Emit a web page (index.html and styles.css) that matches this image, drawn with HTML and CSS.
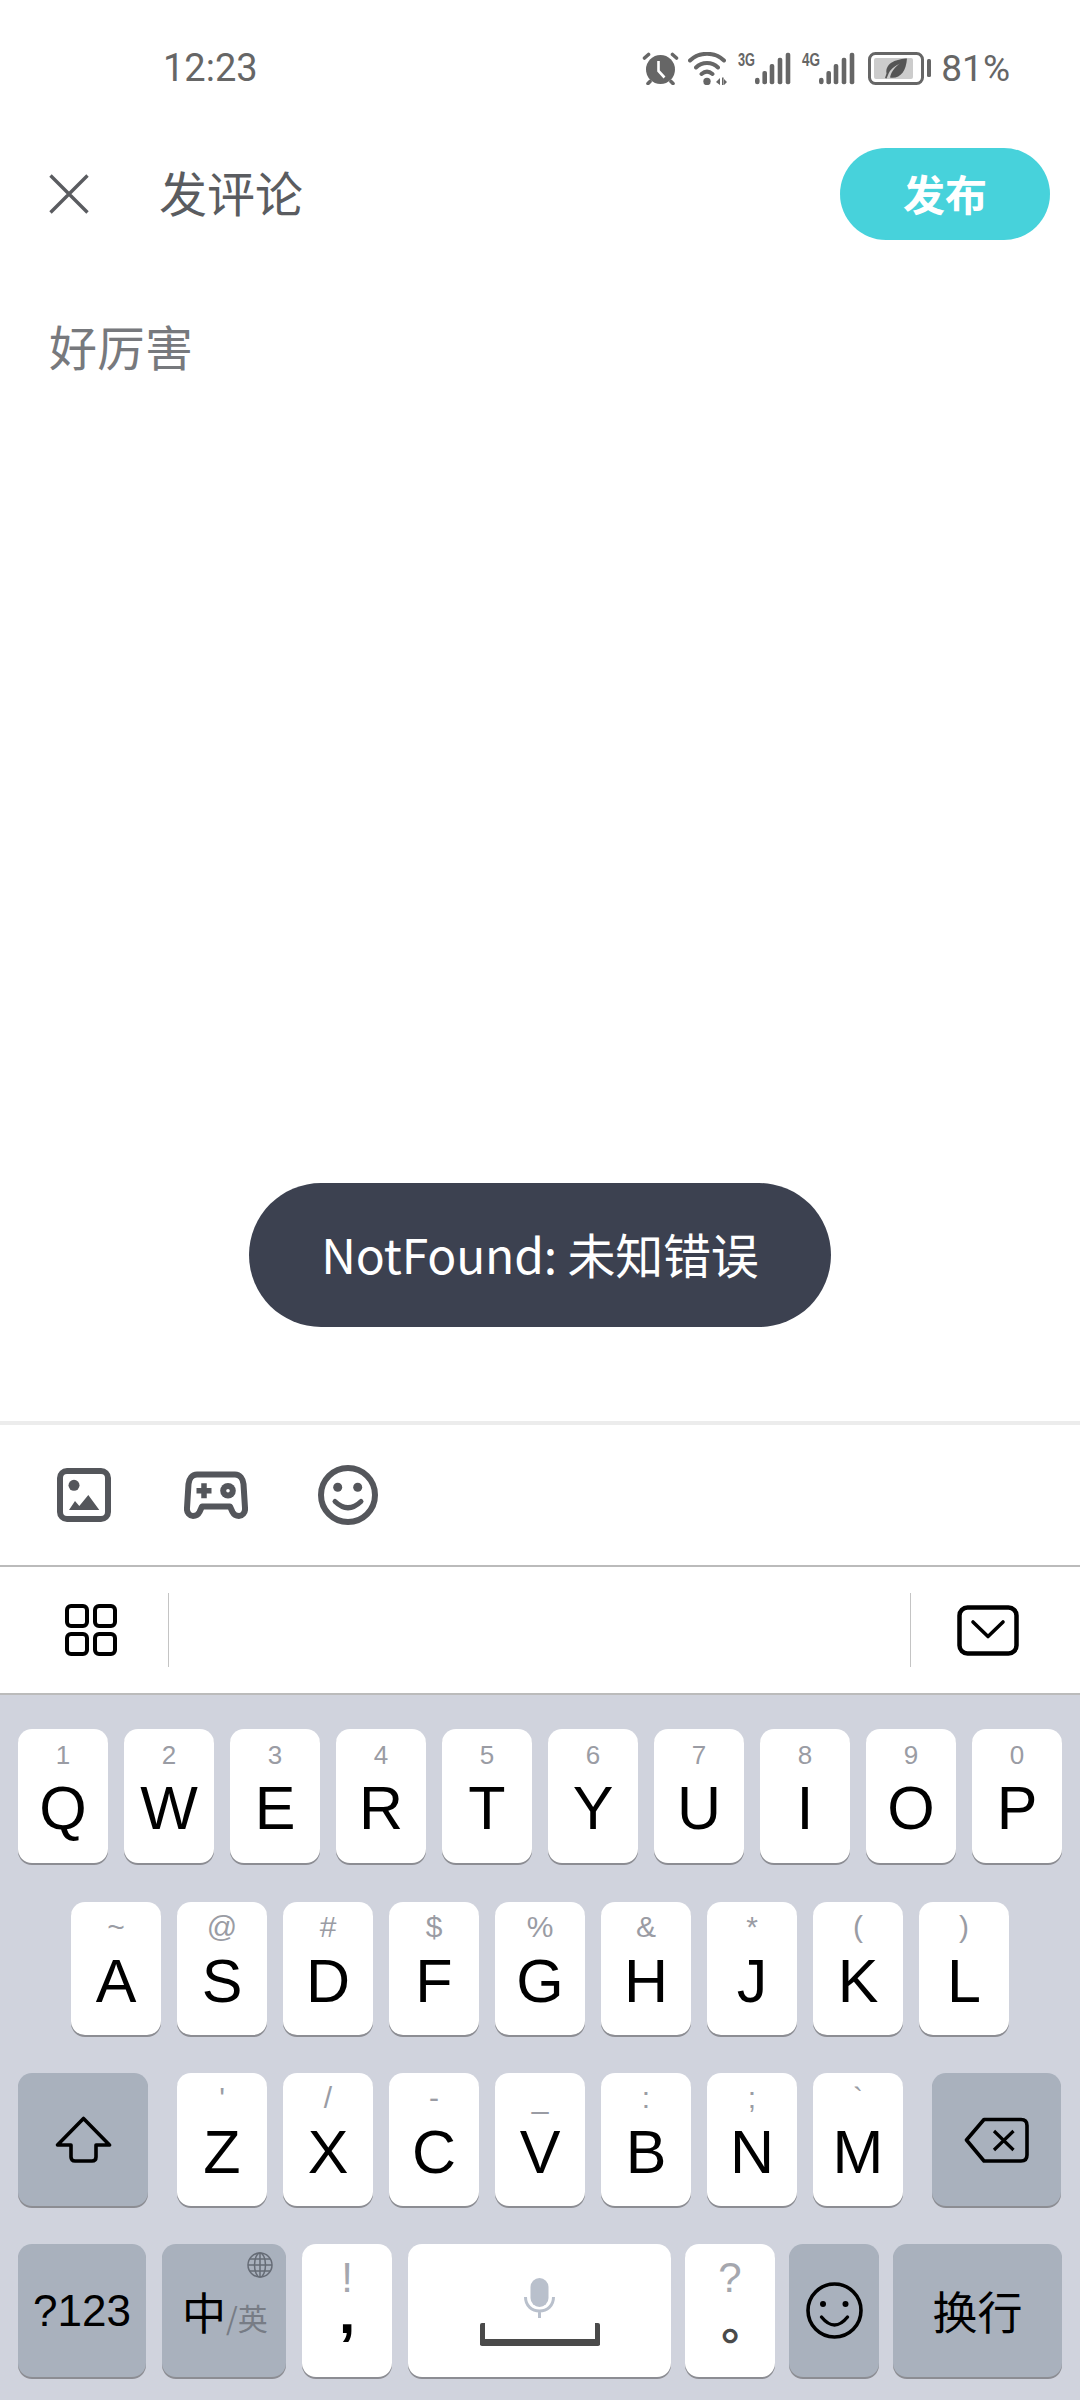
FILE: index.html
```html
<!DOCTYPE html>
<html lang="zh-CN">

<head>
  <meta charset="UTF-8">
  <meta name="viewport" content="width=device-width, initial-scale=1.0">
  <title>发评论</title>
  <link rel="stylesheet" href="styles.css">
</head>

<body>
  <div class="page">
    <div class="status">
      <span class="time">12:23</span>
      <div class="status-icons">
        <svg class="ic-alarm" width="37" height="33" viewBox="0 0 37 33">
          <circle cx="18.5" cy="17.5" r="14.5" fill="#666" />
          <path d="M16.5 9V19l6 6.5" fill="none" stroke="#fff" stroke-width="2.6" />
          <path d="M2.5 6L6.5 2.5M34.500 6L30.500 2.5M6 31.500l2-2M31 31.500l-2-2" fill="none" stroke="#666" stroke-width="3.600" stroke-linecap="round" />
        </svg>
        <svg class="ic-wifi" width="39" height="33" viewBox="0 0 39 33">
          <path d="M2 8.5C11 -0.5 27 -0.5 36 8.5M8 15.5C14 9.5 24 9.5 30 15.5M13.5 22C17 19 21 19 24.5 22" fill="none" stroke="#666" stroke-width="3.900" stroke-linecap="round" />
          <circle cx="19" cy="29.5" r="3.700" fill="#666" />
          <path d="M28 30l4-4v7zM34 25.5h1.6v7.5H34zM36 27l3 3-3 3z" fill="#666" />
        </svg>
        <svg class="ic-signal" width="53" height="33" viewBox="0 0 53 33">
          <text x="0" y="14" class="net" textLength="17" lengthAdjust="spacingAndGlyphs">3G</text>
          <rect x="17" y="25.7" width="4.6" height="6.6" rx="2.3" fill="#666" />
          <rect x="24.4" y="19" width="4.6" height="13.3" rx="2" fill="#666" />
          <rect x="31.7" y="12" width="4.6" height="20.3" rx="2" fill="#666" />
          <rect x="39.7" y="5.7" width="4.6" height="26.6" rx="2" fill="#666" />
          <rect x="47.7" y="0.7" width="4.6" height="31.6" rx="2" fill="#666" />
        </svg>
        <svg class="ic-signal" width="53" height="33" viewBox="0 0 53 33">
          <text x="0" y="14" class="net" textLength="18" lengthAdjust="spacingAndGlyphs">4G</text>
          <rect x="17" y="25.7" width="4.6" height="6.6" rx="2.3" fill="#666" />
          <rect x="24.4" y="19" width="4.6" height="13.3" rx="2" fill="#666" />
          <rect x="31.7" y="12" width="4.6" height="20.3" rx="2" fill="#666" />
          <rect x="39.7" y="5.7" width="4.6" height="26.6" rx="2" fill="#666" />
          <rect x="47.7" y="0.7" width="4.6" height="31.6" rx="2" fill="#666" />
        </svg>
        <svg class="ic-battery" width="63" height="33" viewBox="0 0 63 33">
          <rect x="1.5" y="1.5" width="53" height="30" rx="6" fill="none" stroke="#666" stroke-width="3" />
          <rect x="6" y="6" width="39" height="21" rx="2" fill="#ccc" />
          <rect x="59" y="7" width="4" height="18" rx="1.5" fill="#666" />
          <path d="M39 6.5C30 7 17 10 18.5 21.5L17 26l1.5.5 1.5-3.5C22 17 27 14 32 11.5 27 15 23.5 19 22 25.5 32 27 38 20 39 6.5Z" fill="#555" />
        </svg>
        <span class="percent">81%</span>
      </div>
    </div>

    <div class="header">
      <svg class="close" width="40" height="40" viewBox="0 0 40 40">
        <path d="M1.5 1.5L38.5 38.5M38.5 1.5L1.5 38.5" fill="none" stroke="#5a5c60" stroke-width="3.4" />
      </svg>
      <span class="title">发评论</span>
      <span class="publish">发布</span>
    </div>

    <div class="editor">好厉害</div>

    <div class="toast">NotFound: 未知错误</div>

    <div class="toolbar">
      <svg class="tool-image" width="54" height="54" viewBox="0 0 54 54">
        <rect x="3" y="3" width="48" height="48" rx="7" fill="none" stroke="#54565b" stroke-width="6" />
        <circle cx="17" cy="17.3" r="5.5" fill="#54565b" />
        <path d="M12 42L18 33L22.3 38L31.3 27L42.3 42Z" fill="#54565b" />
      </svg>
      <svg class="tool-game" width="64" height="48" viewBox="0 0 64 48">
        <path d="M13 3.500H51C56 3.500 59 8 59.500 13L61 37C61.500 42 58 45 55 45C52 45 50 44 48.500 41L46 35.500H18L15.500 41C14 44 12 45 9 45C6 45 2.500 42 3 37L4.500 13C5 8 8 3.500 13 3.500Z" fill="none" stroke="#54565b" stroke-width="6" stroke-linejoin="round" />
        <path d="M12.500 19.700H27.500M20 12.200V27.200" fill="none" stroke="#54565b" stroke-width="5.500" />
        <circle cx="44" cy="19.700" r="7.800" fill="#54565b" />
        <circle cx="44" cy="19.700" r="1.800" fill="#fff" />
      </svg>
      <svg class="tool-smile" width="60" height="60" viewBox="0 0 60 60">
        <circle cx="30" cy="30" r="27" fill="none" stroke="#54565b" stroke-width="6" />
        <circle cx="19.700" cy="22.300" r="4.500" fill="#54565b" />
        <circle cx="39.700" cy="22.300" r="4.500" fill="#54565b" />
        <path d="M17 36.500Q30 49 43 36.500" fill="none" stroke="#54565b" stroke-width="5" stroke-linecap="round" />
      </svg>
    </div>

    <div class="candidates">
      <div class="cand-left">
        <div class="grid-icon"><i></i><i></i><i></i><i></i></div>
      </div>
      <div class="cand-right">
        <svg width="62" height="51" viewBox="0 0 62 51">
          <rect x="2.500" y="2.500" width="57" height="46" rx="8" fill="none" stroke="#000" stroke-width="4.500" />
          <path d="M16 17L31 31.500L46 17" fill="none" stroke="#000" stroke-width="3.600" stroke-linecap="round" stroke-linejoin="round" />
        </svg>
      </div>
    </div>

    <div class="keyboard">
      <div class="row row-first">
        <div class="key"><span class="alt">1</span><span class="letter">Q</span></div>
        <div class="key"><span class="alt">2</span><span class="letter">W</span></div>
        <div class="key"><span class="alt">3</span><span class="letter">E</span></div>
        <div class="key"><span class="alt">4</span><span class="letter">R</span></div>
        <div class="key"><span class="alt">5</span><span class="letter">T</span></div>
        <div class="key"><span class="alt">6</span><span class="letter">Y</span></div>
        <div class="key"><span class="alt">7</span><span class="letter">U</span></div>
        <div class="key"><span class="alt">8</span><span class="letter">I</span></div>
        <div class="key"><span class="alt">9</span><span class="letter">O</span></div>
        <div class="key"><span class="alt">0</span><span class="letter">P</span></div>
      </div>
      <div class="row row-second row-symbols">
        <div class="key"><span class="alt">~</span><span class="letter">A</span></div>
        <div class="key"><span class="alt">@</span><span class="letter">S</span></div>
        <div class="key"><span class="alt">#</span><span class="letter">D</span></div>
        <div class="key"><span class="alt">$</span><span class="letter">F</span></div>
        <div class="key"><span class="alt">%</span><span class="letter">G</span></div>
        <div class="key"><span class="alt">&amp;</span><span class="letter">H</span></div>
        <div class="key"><span class="alt">*</span><span class="letter">J</span></div>
        <div class="key"><span class="alt">(</span><span class="letter">K</span></div>
        <div class="key"><span class="alt">)</span><span class="letter">L</span></div>
      </div>
      <div class="row row-symbols">
        <div class="key key-gray key-shift">
          <svg width="57" height="48" viewBox="0 0 57 48">
            <path d="M28.500 2.500L54.500 29H41V41Q41 45 37 45H20Q16 45 16 41V29H2.500Z" fill="none" stroke="#000" stroke-width="3.600" stroke-linejoin="round" />
          </svg>
        </div>
        <div class="key"><span class="alt">'</span><span class="letter">Z</span></div>
        <div class="key"><span class="alt">/</span><span class="letter">X</span></div>
        <div class="key"><span class="alt">-</span><span class="letter">C</span></div>
        <div class="key"><span class="alt">_</span><span class="letter">V</span></div>
        <div class="key"><span class="alt">:</span><span class="letter">B</span></div>
        <div class="key"><span class="alt">;</span><span class="letter">N</span></div>
        <div class="key"><span class="alt">`</span><span class="letter">M</span></div>
        <div class="key key-gray key-del">
          <svg width="65" height="46" viewBox="0 0 65 46">
            <path d="M20 2.500H57Q63 2.500 63 8.500V38Q63 44 57 44H20L2.500 23Z" fill="none" stroke="#000" stroke-width="3.600" stroke-linejoin="round" />
            <path d="M30 14L49.500 33M49.500 14L30 33" fill="none" stroke="#000" stroke-width="3.200" />
          </svg>
        </div>
      </div>
      <div class="row">
        <div class="key key-gray key-num">?123</div>
        <div class="key key-gray key-lang">
          <svg class="globe" width="26" height="26" viewBox="0 0 26 26">
            <g fill="none" stroke="#666c76" stroke-width="1.500">
              <circle cx="13" cy="13" r="12" />
              <ellipse cx="13" cy="13" rx="5.500" ry="12" />
              <path d="M13 1V25M1 13H25M3 7H23M3 19H23" />
            </g>
          </svg>
          <span class="lang-main">中</span><span class="lang-sub">/英</span>
        </div>
        <div class="key key-punct"><span class="alt-big">!</span><span class="comma">,</span></div>
        <div class="key key-space">
          <svg class="mic" width="31" height="40" viewBox="0 0 31 40">
            <rect x="6.500" y="0" width="18" height="29" rx="9" fill="#b9c0cc" />
            <path d="M1.500 19C1.500 28 8 33 15.500 33C23 33 29.500 28 29.500 19M15.500 33V40" fill="none" stroke="#b9c0cc" stroke-width="3" />
          </svg>
          <div class="spacebar"></div>
        </div>
        <div class="key key-punct key-tight"><span class="alt-big">?</span><span class="period">。</span></div>
        <div class="key key-gray key-tight">
          <svg width="57" height="57" viewBox="0 0 57 57">
            <circle cx="28.500" cy="28.500" r="26.500" fill="none" stroke="#000" stroke-width="3.600" />
            <circle cx="17" cy="22" r="3" fill="#000" />
            <circle cx="39.500" cy="22" r="3" fill="#000" />
            <path d="M15.500 35Q28.500 51 41.500 35" fill="none" stroke="#000" stroke-width="3.400" stroke-linecap="round" />
          </svg>
        </div>
        <div class="key key-gray key-tight key-enter">换行</div>
      </div>
    </div>
  </div>
</body>

</html>
```

FILE: styles.css
```css
* {
  box-sizing: border-box;
}

body {
  margin: 0;
  background: #fff;
  font-family: "Noto Sans CJK SC", "Noto Sans", sans-serif;
}

.page {
  position: relative;
  width: 1080px;
  height: 2400px;
  display: flex;
  flex-direction: column;
  overflow: hidden;
}

/* status bar */
.status {
  height: 100px;
  padding: 37px 70px 0 163px;
  display: flex;
  align-items: flex-start;
  justify-content: space-between;
  color: #666;
  font-family: Roboto, sans-serif;
}

.time {
  font-size: 38px;
  line-height: 62px;
}

.status-icons {
  display: flex;
  align-items: center;
  height: 62px;
}

.status-icons svg {
  display: block;
}

.ic-wifi {
  margin-left: 9px;
}

.ic-signal {
  margin-left: 11px;
  overflow: visible;
}

.ic-battery {
  margin-left: 13px;
}

.net {
  font-family: "Liberation Sans", sans-serif;
  font-size: 18px;
  font-weight: 700;
  fill: #666;
}

.percent {
  margin-left: 10px;
  font-size: 37px;
}

/* header */
.header {
  height: 184px;
  padding: 0 30px 0 49px;
  display: flex;
  align-items: center;
}

.close {
  margin: 3px 70px 0 0;
}

.title {
  flex: 1;
  margin-top: -2px;
  font-size: 48px;
  color: #5a5c60;
}

.publish {
  width: 210px;
  height: 92px;
  margin-top: 4px;
  border-radius: 46px;
  background: #47d2db;
  color: #fff;
  font-size: 42px;
  font-weight: 700;
  line-height: 89px;
  text-align: center;
}

/* editor */
.editor {
  flex: 1;
  padding: 26px 49px 0;
  font-size: 48px;
  line-height: 70px;
  color: #77797d;
}

.toast {
  position: absolute;
  left: 249px;
  top: 1183px;
  width: 582px;
  height: 144px;
  border-radius: 72px;
  background: #3c4150;
  color: #fff;
  font-size: 48px;
  letter-spacing: -0.2px;
  line-height: 140px;
  text-align: center;
}

/* tools above keyboard */
.toolbar {
  height: 146px;
  padding-left: 57px;
  border-top: 4px solid #ececec;
  border-bottom: 2px solid #bbb;
  display: flex;
  align-items: center;
}

.tool-game {
  margin-left: 73px;
}

.tool-smile {
  margin-left: 70px;
}

.candidates {
  height: 128px;
  padding: 26px 0;
  display: flex;
  justify-content: space-between;
  border-bottom: 2px solid #bbb;
}

.cand-left {
  width: 169px;
  padding-left: 65px;
  border-right: 1px solid #c4c4c4;
  display: flex;
  align-items: center;
}

.grid-icon {
  display: grid;
  grid-template-columns: 24px 24px;
  grid-auto-rows: 24px;
  gap: 4px;
}

.grid-icon i {
  border: 4.500px solid #000;
  border-radius: 6px;
}

.cand-right {
  width: 170px;
  padding-left: 46px;
  border-left: 1px solid #c4c4c4;
  display: flex;
  align-items: center;
}

/* keyboard */
.keyboard {
  height: 705px;
  padding: 34px 18px 0;
  background: #d0d3dd;
  display: flex;
  flex-direction: column;
  gap: 38px;
}

.row {
  display: flex;
  gap: 16px;
  height: 133px;
}

.row-first {
  height: 134px;
  margin-bottom: 1px;
}

.row-second {
  padding-left: 53px;
}

.key {
  position: relative;
  width: 90px;
  padding-top: 13px;
  border-radius: 14px;
  background: #fff;
  box-shadow: 0 2px 0 #8c8d93;
  display: flex;
  flex-direction: column;
  align-items: center;
  font-family: "Liberation Sans", sans-serif;
  color: #000;
}

.alt {
  height: 26px;
  font-size: 26px;
  line-height: 26px;
  color: #9a9ca4;
}

.letter {
  margin-top: 5px;
  font-size: 61px;
  line-height: 70px;
}

/* the symbols on the lower rows are drawn larger than the digits */
.row-symbols .key {
  padding-top: 10px;
}

.row-symbols .alt {
  height: 30px;
  font-size: 30px;
  line-height: 30px;
}

.row-symbols .letter {
  margin-top: 4px;
}

.row-symbols .key-gray,
.key-gray {
  padding-top: 0;
  background: #a9b1bd;
  justify-content: center;
}

.key-shift {
  width: 130px;
  margin-right: 13px;
}

.key-del {
  width: 129px;
  margin-left: 13px;
}

.key-num {
  width: 128px;
  font-size: 44px;
}

.key-lang {
  width: 124px;
  padding: 37px 0 0 20px;
  flex-direction: row;
  align-items: baseline;
  justify-content: flex-start;
  font-family: "Noto Sans CJK SC", sans-serif;
}

.globe {
  position: absolute;
  top: 8px;
  right: 13px;
}

.lang-main {
  font-size: 44px;
  line-height: 60px;
}

.lang-sub {
  font-size: 30px;
  line-height: 60px;
  color: #777c85;
}

.key-punct {
  padding-top: 17px;
}

.alt-big {
  font-size: 42px;
  line-height: 34px;
  color: #a5a7ae;
}

.comma {
  font-size: 60px;
  font-weight: 700;
  line-height: 36px;
}

.period {
  margin-top: 20px;
  font-family: "Noto Sans CJK TC", sans-serif;
  font-size: 46px;
  font-weight: 700;
  line-height: 36px;
  color: #4a4a4a;
}

.key-space {
  width: 263px;
  padding-top: 34px;
}

.mic {
  display: block;
}

.spacebar {
  width: 120px;
  height: 23px;
  margin-top: 5px;
  border: 5px solid #4a4a4a;
  border-width: 0 5px 7px;
  border-radius: 2px;
}

.key-tight {
  margin-left: -2px;
}

.key-enter {
  width: 169px;
  font-family: "Noto Sans CJK SC", sans-serif;
  font-size: 45px;
}
```
